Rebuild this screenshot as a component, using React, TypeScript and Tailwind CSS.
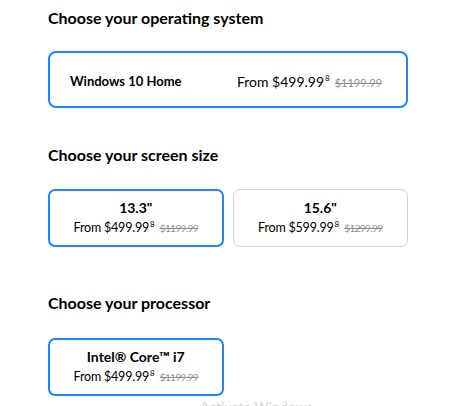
import React from 'react';

type Option = {
  label: string;
  price: string;
  was: string;
  selected?: boolean;
};

const Price: React.FC<{ price: string; was: string; small?: boolean }> = ({ price, was, small }) => (
  <span className="whitespace-nowrap inline-flex items-baseline">
    <span className={`${small ? 'text-[12.5px] tracking-[-0.2px]' : 'text-[14px]'} text-black`}>From {price}</span>
    <span className={`${small ? 'text-[8px] -top-[5px]' : 'text-[8px] -top-[6px]'} text-black ml-[1px] relative`}>8</span>
    <span className={`ml-[5px] ${small ? 'text-[10px] tracking-[-0.6px]' : 'text-[11px]'} text-[#8a8f94] line-through`}>{was}</span>
  </span>
);

const Tile: React.FC<{ opt: Option }> = ({ opt }) => (
  <div
    className={`h-[58px] flex flex-col items-center justify-center rounded-[7px] ${
      opt.selected ? 'border-2 border-[#1e86ff]' : 'border border-[#cfd4d6]'
    }`}
  >
    <div className="text-[14px] font-bold text-black leading-[18px]">{opt.label}</div>
    <div className="leading-[18px]">
      <Price price={opt.price} was={opt.was} small />
    </div>
  </div>
);

const Heading: React.FC<{ children: React.ReactNode }> = ({ children }) => (
  <h2 className="text-[16px] font-bold text-black leading-[24px]">{children}</h2>
);

export default function App() {
  const sizes: Option[] = [
    { label: '13.3"', price: '$499.99', was: '$1199.99', selected: true },
    { label: '15.6"', price: '$599.99', was: '$1299.99' },
  ];

  return (
    <div
      className="w-[466px] h-[406px] bg-white overflow-hidden relative"
      style={{ fontFamily: 'Lato, "Open Sans", sans-serif' }}
    >
      <div className="pl-[48px] w-[408px] pt-[6px]">
        <Heading>Choose your operating system</Heading>
        <div className="mt-[21px] h-[57px] rounded-[8px] border-2 border-[#1e86ff] flex items-center justify-between pl-[20px] pr-[24px] pt-[4px]">
          <span className="text-[13px] font-bold text-black">Windows 10 Home</span>
          <Price price="$499.99" was="$1199.99" />
        </div>

        <div className="mt-[35px]">
          <Heading>Choose your screen size</Heading>
        </div>
        <div className="mt-[22px] grid grid-cols-2 gap-[9px]">
          {sizes.map((s) => (
            <Tile key={s.label} opt={s} />
          ))}
        </div>

        <div className="mt-[44px]">
          <Heading>Choose your processor</Heading>
        </div>
        <div className="mt-[23px] grid grid-cols-2 gap-[9px]">
          <Tile opt={{ label: 'Intel® Core™ i7', price: '$499.99', was: '$1199.99', selected: true }} />
        </div>
      </div>
      <div className="absolute left-[200px] top-[396px] text-[14px] text-[#d6d6d6]">Activate Windows</div>
    </div>
  );
}
